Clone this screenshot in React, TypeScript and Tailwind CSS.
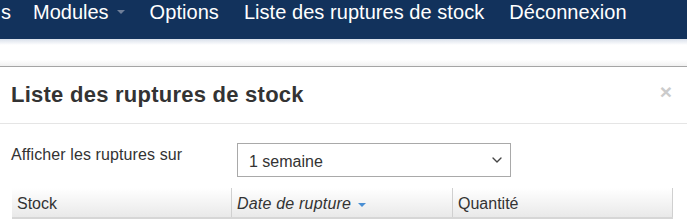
import { ChevronDown } from "lucide-react";

const navItems = ["Options", "Liste des ruptures de stock", "Déconnexion"];

function Caret({ className }: { className: string }) {
  return (
    <span
      className={`inline-block w-0 h-0 border-x-[4.5px] border-x-transparent border-t-[4.5px] ${className}`}
    />
  );
}

export default function App() {
  return (
    <div className="w-[687px] h-[223px] overflow-hidden bg-white font-['Liberation_Sans',Arial,sans-serif] text-[#333]">
      <nav className="h-[39px] bg-[#12325c] flex items-start text-white text-[20px] leading-[20px] pt-[2px]">
        <span className="ml-[1px]">s</span>
        <span className="ml-[22px] flex items-center">
          Modules
          <Caret className="ml-[8px] border-t-[#6f7f99]" />
        </span>
        {navItems.map((item) => (
          <span key={item} className="ml-[25px] first:ml-[28px] tracking-[0.05px]">
            {item}
          </span>
        ))}
      </nav>

      <div className="h-[27px] bg-[linear-gradient(to_bottom,#d9e0ea_0px,#ffffff_6px,#ffffff_21px,#f1f1f1_27px)]" />

      <div className="border-t border-[#a5a5a5] bg-white">
        <div className="h-[57px] px-[11px] pt-[16px] flex items-start justify-between border-b border-[#e5e5e5]">
          <h4 className="text-[22px] leading-[24px] font-bold text-[#333] tracking-[0.25px]">
            Liste des ruptures de stock
          </h4>
          <button className="text-[21px] leading-[21px] font-bold text-[#cbcbcb] mr-[4px] mt-[-2px]">
            ×
          </button>
        </div>

        <div className="px-[11px] pt-[19px]">
          <div className="flex items-start">
            <label className="w-[226px] mt-[2px] text-[16px] leading-[20px] tracking-[0.1px]">
              Afficher les ruptures sur
            </label>
            <div className="w-[274px] h-[34px] border border-[#a9a9a9] flex items-center justify-between pl-[11px] pr-[5px] text-[16px] pt-[3px]">
              <span>1 semaine</span>
              <ChevronDown size={16} strokeWidth={2} className="text-[#444] mt-[-3px]" />
            </div>
          </div>

          <div className="mt-[11px] ml-[1px] w-[661px] flex h-[31px] border-b-2 border-[#d6d6d6] bg-[linear-gradient(to_bottom,#ffffff,#e9e9e9)] text-[16px] leading-[20px]">
            <div className="w-[220px] pl-[5px] pt-[6px] border-r border-[#d0d0d0]">Stock</div>
            <div className="w-[221px] pl-[5px] pt-[6px] border-r border-[#d0d0d0] flex items-start italic tracking-[0.2px]">
              Date de rupture
              <Caret className="ml-[7px] mt-[9px] border-t-[#4a8fd4]" />
            </div>
            <div className="flex-1 pl-[5px] pt-[6px] border-r border-[#d0d0d0]">Quantité</div>
          </div>
        </div>
      </div>
    </div>
  );
}
